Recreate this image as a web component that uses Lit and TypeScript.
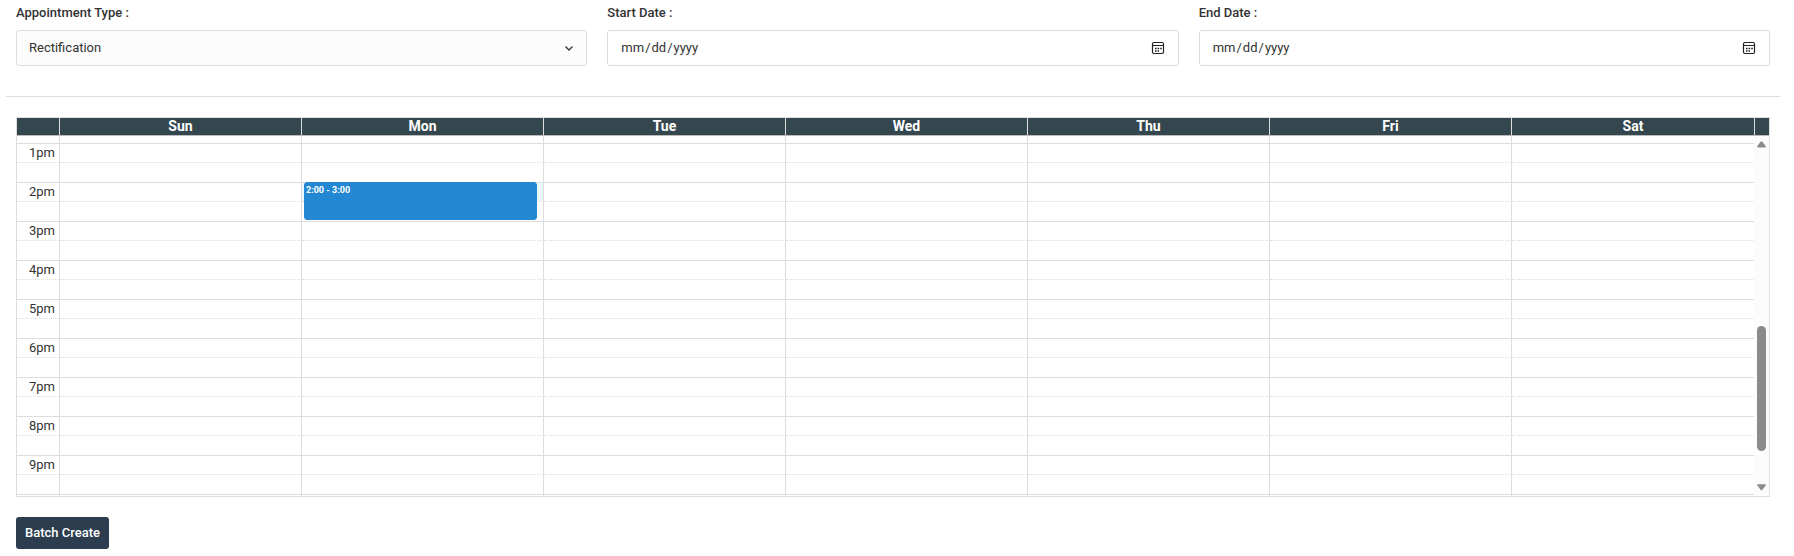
import { LitElement, html, css } from "lit";
import { customElement, state, query } from "lit/decorators.js";
import { styleMap } from "lit/directives/style-map.js";

const DAYS = ["Sun", "Mon", "Tue", "Wed", "Thu", "Fri", "Sat"];
const HOURS = Array.from({ length: 24 }, (_, h) => h);
const HOUR_HEIGHT = 39;
const LABEL_HEIGHT = 18;
const VIEW_HEIGHT = 360;
const INITIAL_SCROLL = 500;

interface Appointment {
  day: number;
  start: number;
  hours: number;
  label: string;
}

const hourLabel = (h: number) => `${h % 12 || 12}${h < 12 ? "am" : "pm"}`;

@customElement("week-calendar")
export class WeekCalendar extends LitElement {
  @state() private offset = INITIAL_SCROLL;
  @state() private thumbTop = 0;
  @state() private thumbHeight = 0;
  @query(".scroller") private scroller!: HTMLDivElement;

  private appointments: Appointment[] = [{ day: 1, start: 14, hours: 1, label: "2:00 - 3:00" }];

  static styles = css`
    :host {
      display: block;
      border: 1px solid #ddd;
      font-size: 13px;
      color: #333;
    }
    table {
      width: 100%;
      table-layout: fixed;
      border-collapse: separate;
      border-spacing: 0;
    }
    th, td {
      box-sizing: border-box;
      padding: 0;
      border-right: 1px solid #ddd;
    }
    th:last-child, td:last-child {
      border-right: 0;
    }
    .axis {
      width: 43px;
    }
    .head {
      display: grid;
      grid-template-columns: minmax(0, 1fr) 15px;
      background: #34474e;
      border-bottom: 1px solid #bbb;
    }
    .head th {
      height: 17px;
      line-height: 17px;
      font-size: 14px;
      font-weight: 700;
      color: #fff;
    }
    .gutter {
      border-left: 1px solid #ddd;
    }
    .body {
      display: grid;
      grid-template-columns: minmax(0, 1fr) 15px;
      height: 360px;
    }
    .scroller {
      overflow-y: scroll;
      scrollbar-width: none;
    }
    .grid th {
      border-right: 1px solid #ddd;
      font-weight: 400;
      text-align: right;
      padding-right: 4px;
      line-height: 18px;
    }
    .hour > * {
      height: 19px;
      border-top: 1px solid #ddd;
    }
    .half > * {
      height: 20px;
      border-top: 1px dotted #ddd;
    }
    .slot {
      position: relative;
    }
    .selected {
      background: #ebf8fb;
    }
    .event {
      position: absolute;
      z-index: 1;
      top: -1px;
      left: 2px;
      right: 6px;
      box-sizing: border-box;
      padding: 0 1px;
      border: 1px solid #2387d3;
      border-radius: 3px;
      background: #2387d3;
      color: #fff;
      font-size: 9px;
      font-weight: 700;
      line-height: 14px;
    }
    .bar {
      display: flex;
      flex-direction: column;
      align-items: center;
      background: #fcfcfc;
    }
    .arrow {
      display: flex;
      justify-content: center;
      align-items: center;
      width: 15px;
      height: 17px;
      padding: 0;
      border: 0;
      background: none;
    }
    .track {
      position: relative;
      flex: 1;
      width: 9px;
    }
    .thumb {
      position: absolute;
      width: 9px;
      border-radius: 5px;
      background: #8b8b8b;
    }
  `;

  firstUpdated() {
    this.scroller.scrollTop = INITIAL_SCROLL;
    this.syncThumb();
  }

  private syncThumb() {
    const { scrollTop, scrollHeight, clientHeight } = this.scroller;
    const track = clientHeight - 34;
    this.offset = scrollTop;
    this.thumbTop = Math.round((scrollTop / scrollHeight) * track) - 1;
    this.thumbHeight = Math.round((clientHeight / scrollHeight) * track);
  }

  private step(hours: number) {
    this.scroller.scrollTop += hours * HOUR_HEIGHT;
  }

  // A label is filled in only while its line has room inside the scrolled view.
  private axisLabel(hour: number) {
    const top = hour * HOUR_HEIGHT;
    const visible = top >= this.offset && top + LABEL_HEIGHT <= this.offset + VIEW_HEIGHT;
    return visible ? hourLabel(hour) : "";
  }

  private renderSlot(hour: number, day: number) {
    const item = this.appointments.find((a) => a.day === day && a.start === hour);
    if (!item) return html`<td></td>`;
    return html`<td class="slot selected">
      <div class="event" style=${styleMap({ height: `${item.hours * HOUR_HEIGHT - 1}px` })}>${item.label}</div>
    </td>`;
  }

  render() {
    return html`
      <div class="head">
        <table>
          <thead>
            <tr>
              <th class="axis"></th>
              ${DAYS.map((d) => html`<th scope="col">${d}</th>`)}
            </tr>
          </thead>
        </table>
        <div class="gutter"></div>
      </div>
      <div class="body">
        <div class="scroller" @scroll=${this.syncThumb}>
          <table class="grid">
            <colgroup>
              <col class="axis" />
              ${DAYS.map(() => html`<col />`)}
            </colgroup>
            <tbody>
              ${HOURS.map(
                (h) => html`
                  <tr class="hour">
                    <th scope="row">${this.axisLabel(h)}</th>
                    ${DAYS.map((_, d) => this.renderSlot(h, d))}
                  </tr>
                  <tr class="half">
                    <th></th>
                    ${DAYS.map(() => html`<td></td>`)}
                  </tr>
                `
              )}
            </tbody>
          </table>
        </div>
        <div class="bar">
          <button class="arrow" aria-label="Scroll up" @click=${() => this.step(-1)}>
            <svg width="9" height="7" viewBox="0 0 9 7"><path d="M3.6.8Q4.5-.4 5.4.8L8.7 5Q9.2 6.4 8 6.4H1Q-.2 6.4.3 5Z" fill="#8b8b8b" /></svg>
          </button>
          <div class="track">
            <div class="thumb" style=${styleMap({ top: `${this.thumbTop}px`, height: `${this.thumbHeight}px` })}></div>
          </div>
          <button class="arrow" aria-label="Scroll down" @click=${() => this.step(1)}>
            <svg width="9" height="7" viewBox="0 0 9 7"><path d="M3.6 5.8Q4.5 7 5.4 5.8L8.7 1.6Q9.2.2 8 .2H1Q-.2.2.3 1.6Z" fill="#8b8b8b" /></svg>
          </button>
        </div>
      </div>
    `;
  }
}

@customElement("app-root")
export class AppRoot extends LitElement {
  static styles = css`
    :host {
      display: block;
      padding: 4px 24px 8px 16px;
      background: #fff;
      color: #333;
      font-family: Roboto, "Liberation Sans", sans-serif;
      font-size: 13px;
    }
    .filters {
      display: grid;
      grid-template-columns: repeat(3, minmax(0, 1fr));
      gap: 20px;
    }
    .field {
      display: flex;
      flex-direction: column;
      gap: 8px;
    }
    label {
      font-weight: 500;
      line-height: 18px;
    }
    select, input {
      box-sizing: border-box;
      width: 100%;
      height: 36px;
      margin: 0;
      border: 1px solid #ddd;
      border-radius: 3px;
      background-color: #fff;
      color: #333;
      font: inherit;
    }
    input {
      padding: 0 13px 2px 12px;
    }
    select {
      appearance: none;
      padding: 0 12px 2px;
      background: #fcfcfc
        url("data:image/svg+xml,%3Csvg xmlns='http://www.w3.org/2000/svg' width='10' height='10' viewBox='0 0 10 10'%3E%3Cpath d='M1.5 3.5 5 7 8.5 3.5' fill='none' stroke='%23333' stroke-width='1.3'/%3E%3C/svg%3E")
        no-repeat right 12px center;
    }
    input::-webkit-calendar-picker-indicator {
      width: 14px;
      height: 14px;
      padding: 2px 0 0;
      background: url("data:image/svg+xml,%3Csvg xmlns='http://www.w3.org/2000/svg' width='14' height='14' viewBox='0 0 14 14'%3E%3Crect x='1.5' y='1.5' width='11' height='11' rx='1.5' fill='none' stroke='%23222' stroke-width='1.2'/%3E%3Cpath d='M1.5 4.5H12.5' stroke='%23222' stroke-width='1.2'/%3E%3Cpath d='M4 7.5H11' stroke='%23222' stroke-width='1.3' stroke-dasharray='1.6 1'/%3E%3Cpath d='M4 10H8' stroke='%23222' stroke-width='1.3' stroke-dasharray='1.6 1'/%3E%3C/svg%3E")
        no-repeat center bottom;
    }
    hr {
      height: 1px;
      margin: 30px -10px 20px;
      border: 0;
      background: #ddd;
    }
    .create {
      height: 32px;
      margin-top: 20px;
      padding: 0 9px 2px;
      border: 0;
      border-radius: 3px;
      background: #2b3d4f;
      color: #fff;
      font: inherit;
      font-weight: 500;
    }
  `;

  render() {
    return html`
      <div class="filters">
        <div class="field">
          <label for="type">Appointment Type :</label>
          <select id="type">
            <option>Rectification</option>
          </select>
        </div>
        <div class="field">
          <label for="start">Start Date :</label>
          <input id="start" type="date" />
        </div>
        <div class="field">
          <label for="end">End Date :</label>
          <input id="end" type="date" />
        </div>
      </div>
      <hr />
      <week-calendar></week-calendar>
      <button class="create" type="button">Batch Create</button>
    `;
  }
}
